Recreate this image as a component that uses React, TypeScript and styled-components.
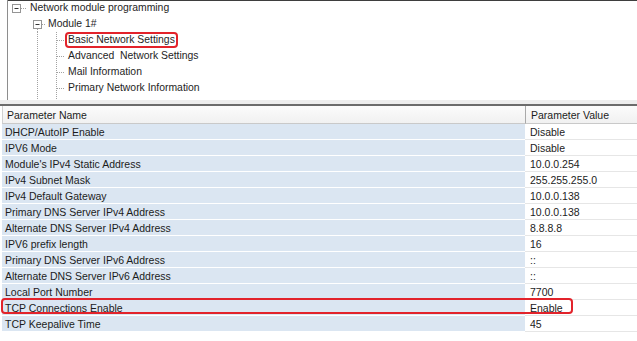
import React from 'react';
import styled, { createGlobalStyle } from 'styled-components';

const GlobalStyle = createGlobalStyle`
  html, body {
    margin: 0;
    padding: 0;
    background: #ffffff;
  }
  body {
    font-family: 'Liberation Sans', Arial, sans-serif;
    color: #1c1c1c;
  }
`;

const Screen = styled.div`
  width: 637px;
  height: 341px;
  overflow: hidden;
  display: flex;
  flex-direction: column;
  background: #ffffff;
`;

const TreePanel = styled.div`
  height: 100px;
  margin-left: 7px;
  border-left: 1px solid #8e8e8e;
  box-shadow: inset 0 1px 0 #3e3e3e;
  display: flex;
  flex-direction: column;
  overflow: hidden;
`;

const TreeRow = styled.div`
  height: 16px;
  display: flex;
  align-items: center;
  flex-shrink: 0;
`;

const Guides = styled.svg`
  flex-shrink: 0;
  display: block;
`;

const TreeLabel = styled.span<{ $marked?: boolean }>`
  font-size: 10.4px;
  line-height: 12px;
  padding: 0 1px;
  border: 2px solid ${(p) => (p.$marked ? '#e2232b' : 'transparent')};
  border-radius: 4px;
  white-space: pre;
  color: #1e1e1e;
`;

const Splitter = styled.div`
  height: 4px;
  background: #ededed;
  border-bottom: 2px solid #6b6b6b;
`;

const Grid = styled.div`
  display: grid;
  grid-template-columns: 523px 1fr;
  margin-left: 2px;
`;

const HeadCell = styled.div<{ $first?: boolean }>`
  height: 17px;
  display: flex;
  align-items: center;
  padding-left: ${(p) => (p.$first ? '4px' : '5px')};
  font-size: 10.5px;
  background: linear-gradient(#fbfbfb, #f1f1f1);
  border-bottom: 1px solid #c9c9c9;
  border-left: 1px solid ${(p) => (p.$first ? '#d0d0d0' : '#a9a9a9')};
  white-space: nowrap;
`;

const NameCell = styled.div`
  position: relative;
  height: 15px;
  display: flex;
  align-items: center;
  padding-left: 3px;
  font-size: 10.5px;
  background: #dbe6f2;
  border-bottom: 1px solid #ffffff;
  white-space: nowrap;
`;

const ValueCell = styled.div`
  height: 15px;
  display: flex;
  align-items: center;
  padding-left: 5px;
  font-size: 10.5px;
  background: #ffffff;
  border-bottom: 1px solid #e6e6e6;
  white-space: nowrap;
`;

const RowMark = styled.div`
  position: absolute;
  left: -1px;
  top: -2px;
  width: 568px;
  height: 12px;
  border: 2px solid #e2232b;
  border-radius: 4px;
  pointer-events: none;
  z-index: 2;
`;

type Kind = 'root' | 'module' | 'child';

const dot = { stroke: '#a2a2a2', strokeWidth: 1, strokeDasharray: '1 1' };

const Toggle = ({ x }: { x: number }) => (
  <g>
    <rect x={x + 0.5} y={4.5} width={8} height={8} fill="#fff" stroke="#959595" />
    <line x1={x + 2.5} y1={8.5} x2={x + 6.5} y2={8.5} stroke="#333" />
  </g>
);

const Guide = ({ kind }: { kind: Kind }) => {
  if (kind === 'root') {
    return (
      <Guides width={19} height={16}>
        <Toggle x={4} />
        <line x1={13} y1={8.5} x2={19} y2={8.5} {...dot} />
      </Guides>
    );
  }
  if (kind === 'module') {
    return (
      <Guides width={37} height={16}>
        <line x1={29.5} y1={13} x2={29.5} y2={16} {...dot} />
        <Toggle x={25} />
        <line x1={34} y1={8.5} x2={37} y2={8.5} {...dot} />
      </Guides>
    );
  }
  return (
    <Guides width={57} height={16}>
      <line x1={29.5} y1={0} x2={29.5} y2={16} {...dot} />
      <line x1={48.5} y1={0} x2={48.5} y2={16} {...dot} />
      <line x1={49} y1={8.5} x2={57} y2={8.5} {...dot} />
    </Guides>
  );
};

const tree: { kind: Kind; label: string; marked?: boolean }[] = [
  { kind: 'root', label: 'Network module programming' },
  { kind: 'module', label: 'Module 1#' },
  { kind: 'child', label: 'Basic Network Settings', marked: true },
  { kind: 'child', label: 'Advanced  Network Settings' },
  { kind: 'child', label: 'Mail Information' },
  { kind: 'child', label: 'Primary Network Information' },
  { kind: 'child', label: '' },
];

const params: { name: string; value: string; marked?: boolean }[] = [
  { name: 'DHCP/AutoIP Enable', value: 'Disable' },
  { name: 'IPV6 Mode', value: 'Disable' },
  { name: "Module's IPv4 Static Address", value: '10.0.0.254' },
  { name: 'IPv4 Subnet Mask', value: '255.255.255.0' },
  { name: 'IPv4 Default Gateway', value: '10.0.0.138' },
  { name: 'Primary DNS Server IPv4 Address', value: '10.0.0.138' },
  { name: 'Alternate DNS Server IPv4 Address', value: '8.8.8.8' },
  { name: 'IPV6 prefix length', value: '16' },
  { name: 'Primary DNS Server IPv6 Address', value: '::' },
  { name: 'Alternate DNS Server IPv6 Address', value: '::' },
  { name: 'Local Port Number', value: '7700' },
  { name: 'TCP Connections Enable', value: 'Enable', marked: true },
  { name: 'TCP Keepalive Time', value: '45' },
];

const App = () => {
  return (
    <>
      <GlobalStyle />
      <Screen>
        <TreePanel>
          {tree.map((node, idx) => (
            <TreeRow key={idx}>
              <Guide kind={node.kind} />
              {node.label && <TreeLabel $marked={node.marked}>{node.label}</TreeLabel>}
            </TreeRow>
          ))}
        </TreePanel>
        <Splitter />
        <Grid>
          <HeadCell $first>Parameter Name</HeadCell>
          <HeadCell>Parameter Value</HeadCell>
          {params.map((p) => (
            <React.Fragment key={p.name}>
              <NameCell>
                {p.name}
                {p.marked && <RowMark />}
              </NameCell>
              <ValueCell>{p.value}</ValueCell>
            </React.Fragment>
          ))}
        </Grid>
      </Screen>
    </>
  );
};

export default App;
